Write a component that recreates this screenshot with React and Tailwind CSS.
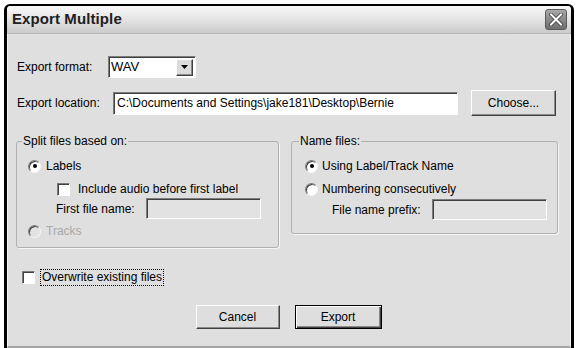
import React from 'react';

const font = { fontFamily: '"Liberation Sans", Arial, sans-serif' };

const sunken =
  'border border-t-[#7c7c7c] border-l-[#7c7c7c] border-r-white border-b-white shadow-[inset_1px_1px_0_#404040]';
const raised =
  'border border-t-white border-l-white border-r-[#404040] border-b-[#404040] shadow-[inset_-1px_-1px_0_#8a8a8a]';

const Radio = ({ checked, disabled }) => (
  <div
    className={`w-[13px] h-[13px] rounded-full flex items-center justify-center border border-t-[#7c7c7c] border-l-[#7c7c7c] border-r-[#f6f6f6] border-b-[#f6f6f6] shadow-[inset_1px_1px_0_#404040] ${
      disabled ? 'bg-[#e2e2e2]' : 'bg-white'
    }`}
  >
    {checked && <div className="w-[4px] h-[4px] rounded-full bg-black" />}
  </div>
);

const Check = () => <div className={`w-[13px] h-[13px] bg-white ${sunken}`} />;

const CloseButton = () => (
  <div className="w-[22px] h-[21px] rounded-[3px] bg-gradient-to-b from-[#a8a8a8] to-[#6e6e6e] border border-[#5a5a5a] flex items-center justify-center">
    <svg width="14" height="13" viewBox="0 0 14 13">
      <path d="M2 1.5 L12 11.5 M12 1.5 L2 11.5" stroke="#3c3c3c" strokeWidth="3.6" strokeLinecap="square" />
      <path d="M2 1.5 L12 11.5 M12 1.5 L2 11.5" stroke="#ffffff" strokeWidth="2" strokeLinecap="square" />
    </svg>
  </div>
);

export default function App() {
  return (
    <div className="w-[578px] h-[348px] bg-white overflow-hidden text-[12px] text-black" style={font}>
      <div className="ml-[4px] mt-[4px] w-[570px] h-[344px] border-l-[3px] border-r-[3px] border-t-[2px] border-black rounded-t-[6px] flex flex-col bg-[#f0f0f0]">
        {/* title bar */}
        <div className="h-[28px] shrink-0 rounded-t-[4px] bg-gradient-to-b from-[#f8f8f8] via-[#e4e4e4] to-[#cbcbcb] border-b border-[#b8b8b8] flex items-center justify-between pl-[5px] pr-[4px]">
          <span className="font-bold text-[15px] text-[#202020] tracking-[0.1px]">Export Multiple</span>
          <CloseButton />
        </div>

        {/* body */}
        <div className="flex-1 bg-[#dfdfdf] border-l border-r border-[#f4f4f4] border-b-2 border-b-[#a4a4a4] pl-[9px] flex flex-col">
          <div className="flex items-center h-[22px] mt-[22px]">
            <span className="w-[91px]">Export format:</span>
            <div className={`w-[88px] h-[22px] bg-white flex items-center justify-between pl-[2px] pr-[2px] ${sunken}`}>
              <span className="text-[13px]">WAV</span>
              <div className={`w-[17px] h-[17px] bg-[#dcdcdc] flex items-center justify-center ${raised}`}>
                <svg width="7" height="4" viewBox="0 0 7 4">
                  <path d="M0 0 H7 L3.5 4 Z" fill="#000" />
                </svg>
              </div>
            </div>
          </div>

          <div className="flex items-center h-[26px] mt-[12px]">
            <span className="w-[96px]">Export location:</span>
            <div className={`w-[345px] h-[23px] bg-white flex items-center pl-[3px] ${sunken}`}>
              C:\Documents and Settings\jake181\Desktop\Bernie
            </div>
            <button className={`ml-[13px] w-[85px] h-[26px] bg-[#dedede] ${raised}`}>Choose...</button>
          </div>

          <div className="flex items-start mt-[18px]">
            <fieldset className="ml-[-1px] w-[263px] h-[114px] border border-[#b0b0b0] rounded-[3px] shadow-[1px_1px_0_#f6f6f6] pl-[11px]">
              <legend className="ml-[-6px] px-[1px] leading-[14px]">Split files based on:</legend>
              <div className="flex items-center h-[16px] mt-[10px] gap-[5px]">
                <Radio checked />
                <span>Labels</span>
              </div>
              <div className="flex items-center h-[16px] mt-[7px] ml-[29px] gap-[8px]">
                <Check />
                <span>Include audio before first label</span>
              </div>
              <div className="flex items-center h-[21px] mt-[1px] ml-[28px]">
                <span className="w-[90px]">First file name:</span>
                <div className={`w-[115px] h-[21px] bg-[#e2e2e2] ${sunken}`} />
              </div>
              <div className="flex items-center h-[16px] mt-[4px] gap-[5px] text-[#a8a8a8]">
                <Radio disabled />
                <span>Tracks</span>
              </div>
            </fieldset>

            <fieldset className="ml-[12px] w-[267px] h-[100px] border border-[#b0b0b0] rounded-[3px] shadow-[1px_1px_0_#f6f6f6] pl-[13px]">
              <legend className="ml-[-6px] px-[1px] leading-[14px]">Name files:</legend>
              <div className="flex items-center h-[16px] mt-[10px] gap-[4px]">
                <Radio checked />
                <span>Using Label/Track Name</span>
              </div>
              <div className="flex items-center h-[16px] mt-[7px] gap-[4px]">
                <Radio />
                <span>Numbering consecutively</span>
              </div>
              <div className="flex items-center h-[21px] mt-[2px] ml-[27px]">
                <span className="w-[100px]">File name prefix:</span>
                <div className={`w-[115px] h-[21px] bg-[#e2e2e2] ${sunken}`} />
              </div>
            </fieldset>
          </div>

          <div className="flex items-center h-[18px] mt-[20px] ml-[5px] gap-[5px]">
            <Check />
            <span className="border border-dotted border-black px-[1px] leading-[15px]">Overwrite existing files</span>
          </div>

          <div className="flex justify-center gap-[15px] mt-[19px] pr-[10px]">
            <button className={`w-[84px] h-[24px] bg-[#dedede] ${raised}`}>Cancel</button>
            <button className="w-[87px] h-[24px] bg-[#dedede] border border-black shadow-[inset_1px_1px_0_#fff,inset_-1px_-1px_0_#404040,inset_-2px_-2px_0_#8a8a8a]">
              Export
            </button>
          </div>
        </div>
      </div>
    </div>
  );
}
